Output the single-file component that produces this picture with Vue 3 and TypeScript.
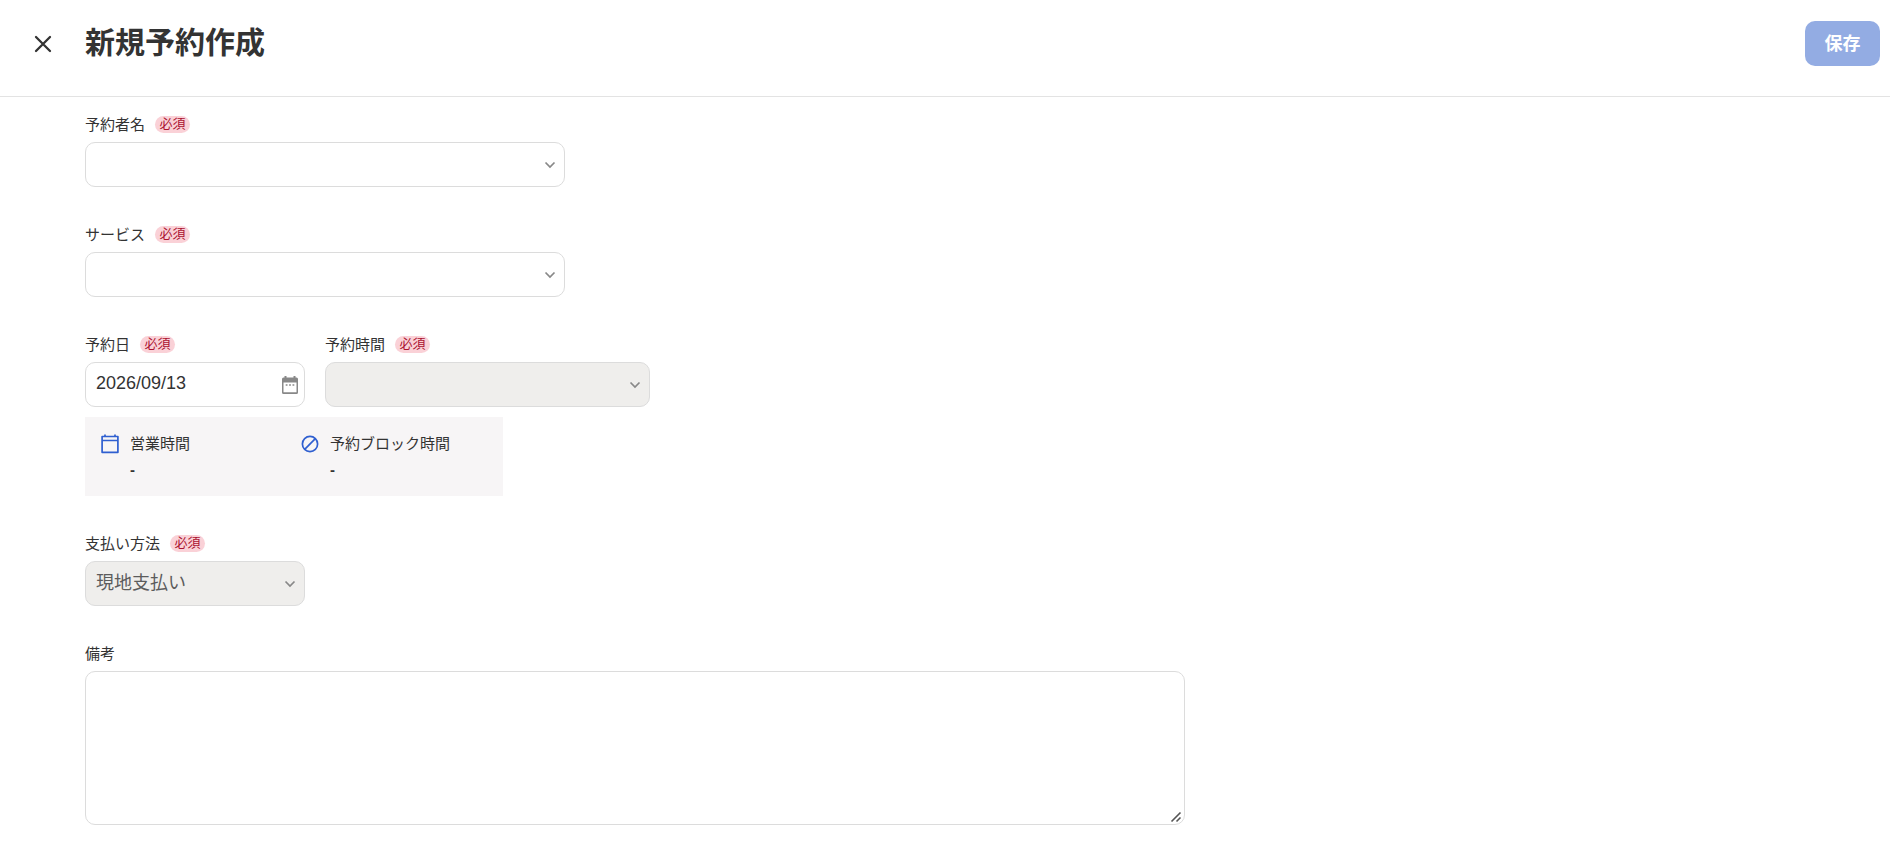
<script setup lang="ts">
import { ref } from 'vue'

const customer = ref('')
const service = ref('')
const date = ref('2026/09/13')
const time = ref('')
const payment = ref('local')
const note = ref('')
</script>

<template>
  <form class="page" @submit.prevent>
    <header class="header">
      <button type="button" class="close" aria-label="閉じる">
        <svg width="18" height="18" viewBox="0 0 18 18" fill="none" stroke="#333" stroke-width="2.3" stroke-linecap="round">
          <path d="M2 2 16 16M16 2 2 16" />
        </svg>
      </button>
      <h1 class="title">新規予約作成</h1>
      <button type="submit" class="save" disabled>保存</button>
    </header>

    <main class="body">
      <div class="field wide">
        <div class="caption">
          <label for="customer">予約者名</label><span class="badge">必須</span>
        </div>
        <div class="control">
          <select id="customer" v-model="customer"></select>
          <svg class="chevron" width="12" height="8" viewBox="0 0 12 8"><path d="M1.500 1.500 6 6l4.500-4.500" /></svg>
        </div>
      </div>

      <div class="field wide">
        <div class="caption">
          <label for="service">サービス</label><span class="badge">必須</span>
        </div>
        <div class="control">
          <select id="service" v-model="service"></select>
          <svg class="chevron" width="12" height="8" viewBox="0 0 12 8"><path d="M1.500 1.500 6 6l4.500-4.500" /></svg>
        </div>
      </div>

      <section class="schedule">
        <div class="row">
          <div class="field narrow">
            <div class="caption">
              <label for="date">予約日</label><span class="badge">必須</span>
            </div>
            <div class="control">
              <input id="date" v-model="date" type="text" />
              <button type="button" class="picker" aria-label="日付を選択">
                <svg width="16" height="18" viewBox="0 0 16 18" fill="#888">
                  <path fill-rule="evenodd" d="M2.500 0h2v1.500h7V0h2v1.500h1A1.500 1.500 0 0 1 16 3v13.500a1.500 1.500 0 0 1-1.500 1.500h-13A1.500 1.500 0 0 1 0 16.500V3A1.500 1.500 0 0 1 1.500 1.500h1ZM1.500 6.500v9.800h13V6.500Z" />
                  <path d="M3.700 8.200h1.800v1.600H3.700zM7.100 8.200h1.800v1.600H7.100zM10.500 8.200h1.800v1.600h-1.800z" />
                </svg>
              </button>
            </div>
          </div>
          <div class="field medium">
            <div class="caption">
              <label for="time">予約時間</label><span class="badge">必須</span>
            </div>
            <div class="control">
              <select id="time" v-model="time" disabled></select>
              <svg class="chevron" width="12" height="8" viewBox="0 0 12 8"><path d="M1.500 1.500 6 6l4.500-4.500" /></svg>
            </div>
          </div>
        </div>

        <dl class="info">
          <div class="info-item">
            <svg class="info-icon" width="20" height="20" viewBox="0 0 20 20" fill="none" stroke="#2f5fd0" stroke-width="1.7" stroke-linejoin="round">
              <path d="M2.100 2.500h15.800v15.800H2.100zM2.100 6.500h15.800M5 .5v2.500M15 .5v2.500" />
            </svg>
            <div>
              <dt>営業時間</dt>
              <dd>-</dd>
            </div>
          </div>
          <div class="info-item">
            <svg class="info-icon" width="20" height="20" viewBox="0 0 20 20" fill="none" stroke="#2f5fd0" stroke-width="1.7">
              <circle cx="10" cy="10" r="7.600" />
              <path d="M4.700 15.300 15.300 4.700" />
            </svg>
            <div>
              <dt>予約ブロック時間</dt>
              <dd>-</dd>
            </div>
          </div>
        </dl>
      </section>

      <div class="field narrow">
        <div class="caption">
          <label for="payment">支払い方法</label><span class="badge">必須</span>
        </div>
        <div class="control">
          <select id="payment" v-model="payment" disabled>
            <option value="local">現地支払い</option>
          </select>
          <svg class="chevron" width="12" height="8" viewBox="0 0 12 8"><path d="M1.500 1.500 6 6l4.500-4.500" /></svg>
        </div>
      </div>

      <div class="field full">
        <div class="caption"><label for="note">備考</label></div>
        <div class="control">
          <textarea id="note" v-model="note"></textarea>
          <svg class="grip" width="12" height="12" viewBox="0 0 12 12"><path d="M1.500 10.500l9-9M6.500 10.500l4-4" /></svg>
        </div>
      </div>
    </main>
  </form>
</template>

<style>
body {
  background: #fff;
}
</style>

<style scoped>
.page,
.page * {
  box-sizing: border-box;
}

.page {
  color: #333;
  font-family: "Liberation Sans", "Noto Sans CJK JP", sans-serif;
  font-size: 15px;
}

button,
input,
select,
textarea {
  margin: 0;
  color: inherit;
  font-family: inherit;
}

.header {
  display: flex;
  align-items: flex-start;
  padding: 20px 10px 28px 28px;
  border-bottom: 1px solid #e3e3e3;
}

.close {
  display: flex;
  align-items: center;
  justify-content: center;
  width: 30px;
  height: 48px;
  padding: 0;
  border: 0;
  background: none;
}

.title {
  flex: 1;
  margin: 0 0 0 27px;
  font-size: 30px;
  font-weight: 700;
  line-height: 46px;
}

.save {
  width: 75px;
  height: 45px;
  margin-top: 1px;
  padding: 0 0 4px;
  border: 0;
  border-radius: 10px;
  background: #93ace3;
  color: #fff;
  font-size: 18px;
  font-weight: 700;
}

.body {
  display: flex;
  flex-direction: column;
  gap: 38px;
  padding: 18px 85px 20px;
}

.field {
  max-width: 100%;
}

.wide {
  width: 480px;
}

.narrow {
  width: 220px;
}

.medium {
  width: 325px;
}

.full {
  width: 1100px;
}

.caption {
  display: flex;
  align-items: center;
  gap: 10px;
  height: 19px;
  margin-bottom: 8px;
  line-height: 19px;
}

.badge {
  width: 35px;
  height: 17px;
  border-radius: 9px;
  background: #fad1d7;
  color: #ab1230;
  font-size: 13px;
  line-height: 15px;
  text-align: center;
}

.control {
  position: relative;
}

select,
input,
textarea {
  display: block;
  width: 100%;
  border: 1px solid #dcdcdc;
  border-radius: 10px;
  background: #fff;
  font-size: 18px;
}

select,
input {
  height: 45px;
  padding: 0 30px 2px 10px;
  appearance: none;
}

select:disabled {
  background: #efeeec;
  color: #5c5c5c;
  opacity: 1;
}

textarea {
  height: 154px;
  padding: 10px;
}

textarea::-webkit-resizer {
  background: transparent;
}

.grip {
  position: absolute;
  right: 3px;
  bottom: 2px;
  fill: none;
  stroke: #555;
  stroke-width: 1.6;
  pointer-events: none;
}

.chevron {
  position: absolute;
  top: 19px;
  right: 9px;
  fill: none;
  stroke: #888;
  stroke-width: 1.7;
  pointer-events: none;
}

.picker {
  position: absolute;
  top: 14px;
  right: 7px;
  display: flex;
  padding: 0;
  border: 0;
  background: none;
}

.schedule {
  display: flex;
  flex-direction: column;
  gap: 10px;
}

.row {
  display: flex;
  gap: 20px;
}

.info {
  display: grid;
  grid-template-columns: 200px 1fr;
  width: 418px;
  max-width: 100%;
  margin: 0;
  padding: 14px 15px;
  background: #f7f5f6;
}

.info-item {
  display: flex;
  gap: 10px;
  line-height: 26px;
}

.info-icon {
  flex: none;
  margin-top: 3px;
}

dd {
  margin: 0;
  font-weight: 700;
  line-height: 25px;
}
</style>
